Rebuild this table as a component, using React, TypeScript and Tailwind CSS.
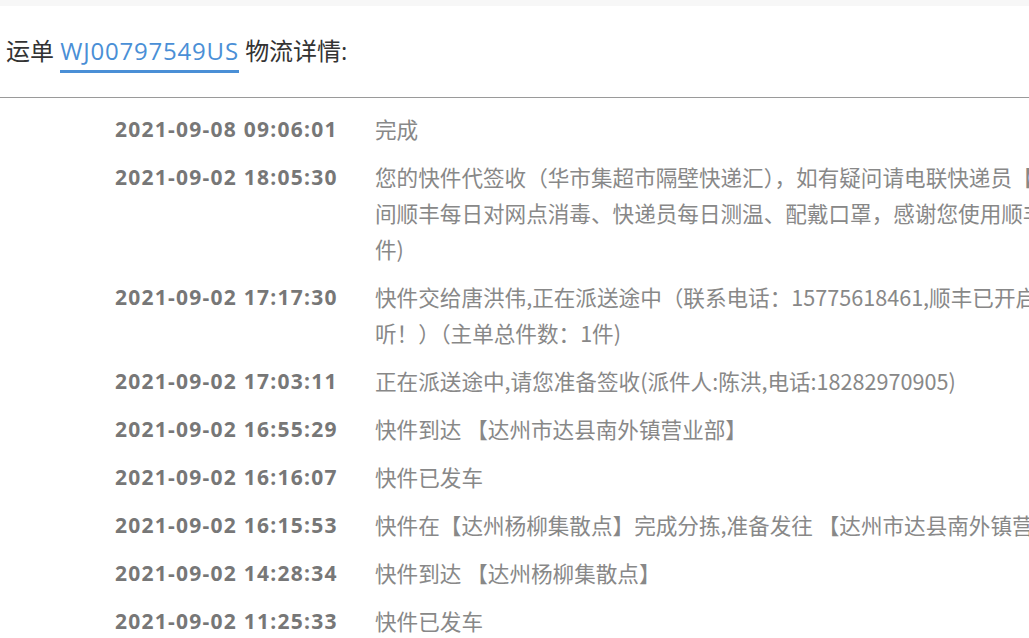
import React from 'react';

type Track = { time: string; lines: string[] };

// lines are split by hand; the panel is wider than the window and clipped on the right
const tracks: Track[] = [
  { time: '2021-09-08 09:06:01', lines: ['完成'] },
  {
    time: '2021-09-02 18:05:30',
    lines: [
      '您的快件代签收（华市集超市隔壁快递汇），如有疑问请电联快递员【唐洪伟，电话：15775618461】。疫情期',
      '间顺丰每日对网点消毒、快递员每日测温、配戴口罩，感谢您使用顺丰，期待再次为您服务。（主单总件数：1',
      '件)',
    ],
  },
  {
    time: '2021-09-02 17:17:30',
    lines: ['快件交给唐洪伟,正在派送途中（联系电话：15775618461,顺丰已开启“安心送”服务，请放心收', '听！）（主单总件数：1件)'],
  },
  { time: '2021-09-02 17:03:11', lines: ['正在派送途中,请您准备签收(派件人:陈洪,电话:18282970905)'] },
  { time: '2021-09-02 16:55:29', lines: ['快件到达 【达州市达县南外镇营业部】'] },
  { time: '2021-09-02 16:16:07', lines: ['快件已发车'] },
  { time: '2021-09-02 16:15:53', lines: ['快件在【达州杨柳集散点】完成分拣,准备发往 【达州市达县南外镇营业部】'] },
  { time: '2021-09-02 14:28:34', lines: ['快件到达 【达州杨柳集散点】'] },
  { time: '2021-09-02 11:25:33', lines: ['快件已发车'] },
];

const App = () => {
  return (
    <div
      className="h-[638px] w-[1029px] overflow-hidden bg-white text-[#333]"
      style={{ fontFamily: '"Open Sans", "Noto Sans CJK SC", sans-serif' }}
    >
      {/* top strip */}
      <div className="h-[6px] bg-[#f7f7f7]" />

      {/* title */}
      <div className="flex h-[92px] items-center border-b border-[#9a9a9a] px-[6px] pb-[2px]">
        <h2 className="whitespace-nowrap text-[24px] leading-none text-[#333]">
          运单{' '}
          <a className="border-b-[3px] border-[#4a8fd6] pb-[3px] tracking-[0.8px] text-[#4a8fd6]" href="#">
            WJ00797549US
          </a>{' '}
          物流详情:
        </h2>
      </div>

      {/* timeline */}
      <ul className="flex w-[1400px] flex-col gap-[12px] pt-[13px]">
        {tracks.map((t) => (
          <li key={t.time} className="flex">
            <span className="w-[375px] shrink-0 pl-[115px] text-[21px] font-bold leading-[36px] tracking-[1.25px] whitespace-nowrap text-[#777]">
              {t.time}
            </span>
            <div
              className="flex-1 text-[21.6px] leading-[36px] text-[#888]"
              style={{ fontFamily: '"Noto Sans CJK SC", sans-serif' }}
            >
              {t.lines.map((l, i) => (
                <p key={i} className="whitespace-nowrap">
                  {l}
                </p>
              ))}
            </div>
          </li>
        ))}
      </ul>
    </div>
  );
};

export default App;
